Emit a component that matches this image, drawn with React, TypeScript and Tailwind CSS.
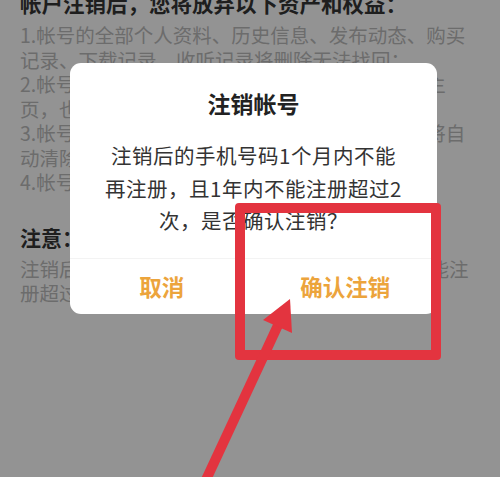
import React from "react"

const font = { fontFamily: '"Noto Sans CJK SC", "Noto Sans", sans-serif' }

export default function App() {
  return (
    <div className="relative w-[500px] h-[477px] overflow-hidden bg-[#939393]" style={font}>
      {/* page behind the mask */}
      <div className="pl-[20px] -mt-[10px] whitespace-nowrap">
        <div className="text-[21.5px] leading-[26px] font-bold text-[#1e1e1e]">
          帐户注销后，您将放弃以下资产和权益：
        </div>
        <div className="mt-[7px] text-[19.5px] leading-[24.5px] text-[#6c6c6c]">
          <div>1.帐号的全部个人资料、历史信息、发布动态、购买</div>
          <div>记录、下载记录、收听记录将删除无法找回；</div>
          <div>2.帐号注销后，您将无法再访问该帐号下的个人主</div>
          <div>页，也无法使用该帐号登录；</div>
          <div>3.帐号内未使用的优惠券、会员权益等虚拟资产将自</div>
          <div>动清除，无法恢复；</div>
          <div>4.帐号绑定的第三方帐号关系将解除。</div>
        </div>
        <div className="mt-[29px] text-[21px] leading-[26px] font-bold text-[#1e1e1e]">注意：</div>
        <div className="mt-[7px] text-[19.5px] leading-[24.5px] text-[#6c6c6c]">
          <div>注销后手机号码一个月内不能再注册，一年内不能注</div>
          <div>册超过2次。</div>
        </div>
      </div>

      {/* dialog */}
      <div className="absolute left-[70px] top-[63px] w-[367px] h-[251px] bg-white rounded-[11px] flex flex-col">
        <div className="pt-[25px] text-center text-[23px] leading-[30px] font-bold text-[#222]">注销帐号</div>
        <div className="mt-[21px] text-center text-[20.5px] leading-[32.5px] tracking-[0.5px] text-[#333]">
          注销后的手机号码1个月内不能
          <br />
          再注册，且1年内不能注册超过2
          <br />
          次，是否确认注销？
        </div>
        <div className="mt-auto h-[56px] flex border-t border-[#f3f3f3]">
          <button className="flex-1 flex items-center justify-center text-[22.5px] font-bold text-[#eca43c]">取消</button>
          <button className="flex-1 flex items-center justify-center text-[22.5px] font-bold text-[#eca43c]">确认注销</button>
        </div>
      </div>

      {/* red highlight */}
      <div className="absolute left-[235px] top-[203px] w-[206px] h-[157px] border-[10px] border-[#e3343f] rounded-[4px]" />
      <svg className="absolute inset-0" width="500" height="477" viewBox="0 0 500 477">
        <line x1="205" y1="482" x2="279" y2="323" stroke="#e3343f" strokeWidth="10" />
        <polygon points="290,299 263,320 292,333" fill="#e3343f" />
      </svg>
    </div>
  )
}
